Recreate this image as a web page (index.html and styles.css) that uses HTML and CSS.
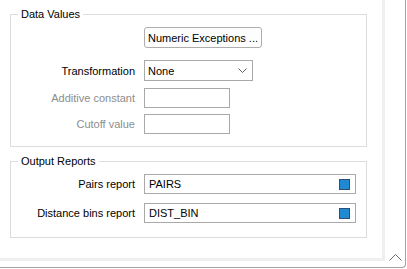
FILE: index.html
```html
<!DOCTYPE html>
<html lang="en">
<head>
  <meta charset="UTF-8" />
  <title>Variogram Reports</title>
  <link rel="stylesheet" href="styles.css">
</head>
<body>

<div class="frame">
  <div class="panel">

    <fieldset class="group group-data">
      <legend>Data Values</legend>
      <div class="form-grid">
        <span></span>
        <button class="btn row-button">Numeric Exceptions ...</button>

        <label class="field-label">Transformation</label>
        <div class="select row-select">
          <span>None</span>
          <svg class="caret" width="9" height="5" viewBox="0 0 9 5">
            <polyline points="0.5,0.5 4.5,4.5 8.5,0.5" fill="none" stroke="#606060" stroke-width="1"/>
          </svg>
        </div>

        <label class="field-label disabled">Additive constant</label>
        <input class="text-input short" type="text" disabled>

        <label class="field-label disabled">Cutoff value</label>
        <input class="text-input short" type="text" disabled>
      </div>
    </fieldset>

    <fieldset class="group group-output">
      <legend>Output Reports</legend>
      <div class="form-grid output-grid">
        <label class="field-label">Pairs report</label>
        <div class="file-input">
          <span>PAIRS</span>
          <span class="file-marker"></span>
        </div>

        <label class="field-label">Distance bins report</label>
        <div class="file-input">
          <span>DIST_BIN</span>
          <span class="file-marker"></span>
        </div>
      </div>
    </fieldset>

  </div>

  <svg class="grip" width="13" height="7" viewBox="0 0 13 7">
    <polyline points="0.5,6.5 6.5,0.5 12.5,6.5" fill="none" stroke="#6a6a6a" stroke-width="1"/>
  </svg>
</div>

</body>
</html>
```

FILE: styles.css
```css
:root {
  --text-color: #000;
  --disabled-text: #8d8d8d;
  --group-border: #dcdcdc;
  --control-border: #a9a9a9;
  --marker-fill: #1f8ad2;
  --marker-border: #2f4e75;
}

* {
  box-sizing: border-box;
  margin: 0;
  padding: 0;
}

body {
  font-family: 'Liberation Sans', Arial, sans-serif;
  font-size: 11px;
  color: var(--text-color);
  background: #fff;
}

.frame {
  position: relative;
  width: 406px;
  height: 268px;
  border-right: 1px solid #a3a3a3;
  border-bottom: 1px solid #a3a3a3;
  border-bottom-right-radius: 4px;
}

.panel {
  width: 385px;
  height: 261px;
  padding: 6px 0 0 10px;
  border-right: 3px solid #efefef;
  border-bottom: 3px solid #efefef;
}

.group {
  width: 357px;
  border: 1px solid var(--group-border);
  padding: 0;
}

.group legend {
  margin-left: 7px;
  padding: 0 3px;
  line-height: 16px;
  font-size: 11px;
}

.group-data {
  padding-top: 5px;
  padding-bottom: 12px;
}

.group-output {
  margin-top: 6px;
  padding-top: 5px;
  padding-bottom: 14px;
}

.form-grid {
  display: grid;
  grid-template-columns: 124px auto;
  column-gap: 9px;
  row-gap: 6px;
  align-items: center;
  justify-items: start;
}

.output-grid {
  row-gap: 9px;
}

.field-label {
  justify-self: end;
  white-space: nowrap;
}

.field-label.disabled {
  color: var(--disabled-text);
}

.btn {
  width: 118px;
  height: 21px;
  font-family: inherit;
  font-size: 11px;
  color: var(--text-color);
  background: #fdfdfd;
  border: 1px solid #adadad;
  border-radius: 3px;
  padding: 0;
  text-align: center;
  white-space: nowrap;
}

.row-button {
  margin-bottom: 6px;
}

.select {
  display: flex;
  align-items: center;
  justify-content: space-between;
  width: 109px;
  height: 21px;
  padding: 0 5px 0 3px;
  border: 1px solid var(--control-border);
  background: #fff;
}

.row-select {
  margin-bottom: 1px;
}

.caret {
  display: block;
}

.text-input {
  height: 20px;
  border: 1px solid var(--control-border);
  background: #fff;
  font-family: inherit;
  font-size: 11px;
}

.text-input.short {
  width: 86px;
}

.file-input {
  display: flex;
  align-items: center;
  justify-content: space-between;
  width: 212px;
  height: 20px;
  padding: 0 5px 0 4px;
  border: 1px solid var(--control-border);
  background: #fff;
}

.file-marker {
  width: 11px;
  height: 11px;
  background: var(--marker-fill);
  border: 1px solid var(--marker-border);
}

.grip {
  position: absolute;
  left: 389px;
  top: 254px;
}
```
